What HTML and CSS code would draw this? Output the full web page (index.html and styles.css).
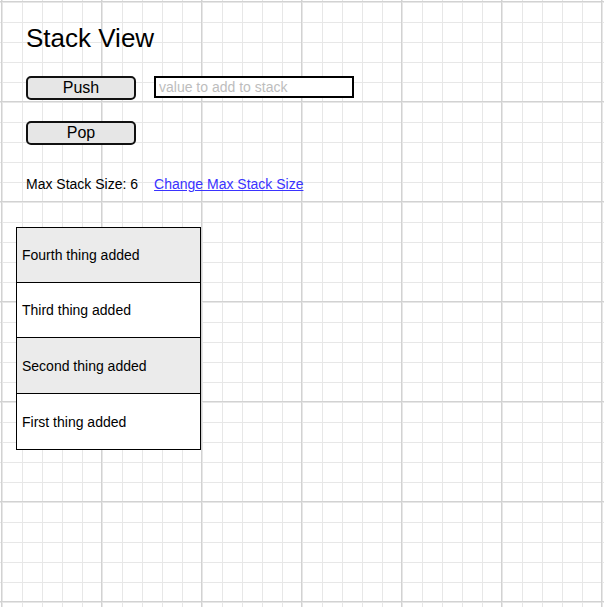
FILE: index.html
```html
<!DOCTYPE html>
<html lang="en">
<head>
<meta charset="utf-8">
<title>Stack View</title>
<link rel="stylesheet" href="styles.css">
</head>
<body>
<main class="page">
  <section class="controls">
    <h1 class="title">Stack View</h1>
    <div class="push-row">
      <button class="btn" type="button">Push</button>
      <input class="value-input" type="text" placeholder="value to add to stack">
    </div>
    <div class="pop-row">
      <button class="btn" type="button">Pop</button>
    </div>
    <p class="max-size">
      <span class="max-label">Max Stack Size: 6</span>
      <a class="max-link" href="#">Change Max Stack Size</a>
    </p>
  </section>
  <ul class="stack">
    <li class="stack-item shaded">Fourth thing added</li>
    <li class="stack-item">Third thing added</li>
    <li class="stack-item shaded">Second thing added</li>
    <li class="stack-item">First thing added</li>
  </ul>
</main>
</body>
</html>
```
FILE: styles.css
```css
html {
  background-color: #ffffff;
  background-image:
    repeating-linear-gradient(to right, transparent 0, transparent 1px, #d2d2d2 1px, #d2d2d2 2px, transparent 2px, transparent 100px),
    repeating-linear-gradient(to bottom, transparent 0, transparent 1px, #d2d2d2 1px, #d2d2d2 2px, transparent 2px, transparent 100px),
    repeating-linear-gradient(to right, transparent 0, transparent 2px, #e7e7e7 2px, #e7e7e7 3px, transparent 3px, transparent 20px),
    repeating-linear-gradient(to bottom, transparent 0, transparent 2px, #e7e7e7 2px, #e7e7e7 3px, transparent 3px, transparent 20px);
  min-height: 100%;
}

body {
  margin: 0;
  font-family: "Liberation Sans", Arial, Helvetica, sans-serif;
  color: #000;
}

.page {
  padding: 23px 16px 0 16px;
}

.controls {
  padding-left: 10px;
}

.title {
  margin: 0;
  font-size: 26px;
  font-weight: normal;
  line-height: 30px;
}

.push-row {
  display: flex;
  align-items: flex-start;
  gap: 18px;
  margin-top: 23px;
}

.pop-row {
  margin-top: 21px;
}

.btn {
  box-sizing: border-box;
  width: 110px;
  height: 24px;
  margin: 0;
  padding: 0;
  border: 2px solid #111;
  border-radius: 5px;
  background: #e6e6e6;
  font-family: inherit;
  font-size: 16px;
  line-height: 20px;
  color: #000;
}

.value-input {
  box-sizing: border-box;
  width: 200px;
  height: 22px;
  margin: 0;
  padding: 0 3px;
  border: 2px solid #000;
  border-radius: 0;
  background: #fff;
  font-family: inherit;
  font-size: 14px;
  outline: none;
}

.value-input::placeholder {
  color: #bdbdbd;
  opacity: 1;
}

.max-size {
  display: flex;
  gap: 16px;
  margin: 31px 0 0 0;
  font-size: 14px;
  line-height: 16px;
}

.max-link {
  color: #3a33ff;
  text-decoration: underline;
}

.stack {
  list-style: none;
  margin: 35px 0 0 0;
  padding: 0;
  width: 185px;
  box-sizing: border-box;
  border: 1px solid #000;
}

.stack-item {
  display: flex;
  align-items: center;
  height: 54px;
  padding-left: 5px;
  font-size: 14px;
  background: #fff;
}

.stack-item + .stack-item {
  border-top: 1px solid #000;
}

.stack-item:nth-child(n+3) {
  height: 55px;
}

.shaded {
  background: #ebebeb;
}
```
